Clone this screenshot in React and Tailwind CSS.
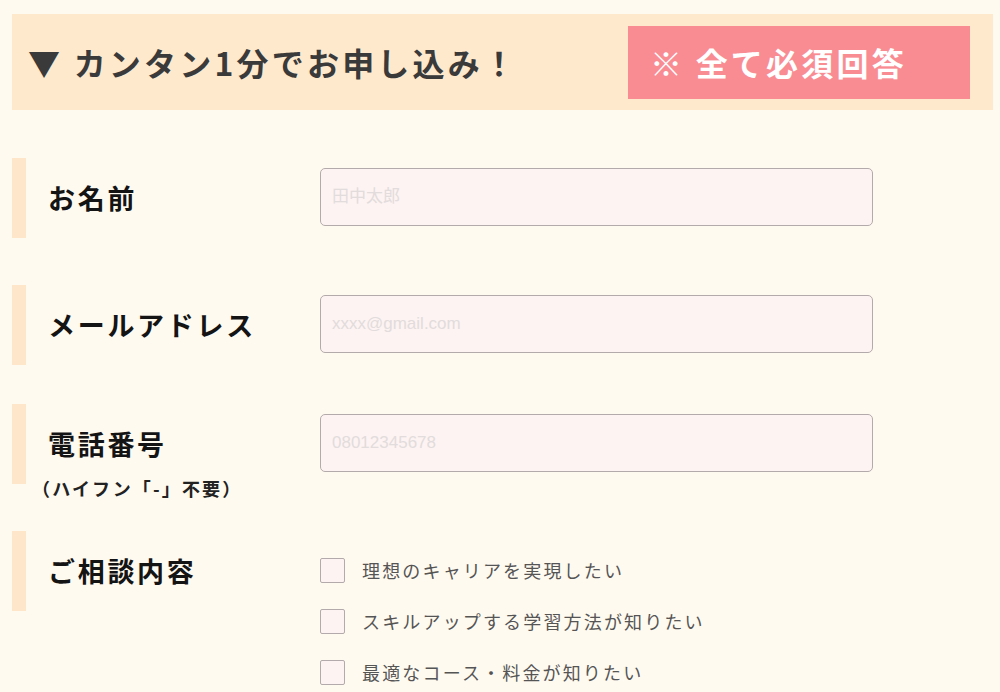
const jp = { fontFamily: '"Noto Sans CJK JP", "Noto Sans", sans-serif' };

const topics = [
  '理想のキャリアを実現したい',
  'スキルアップする学習方法が知りたい',
  '最適なコース・料金が知りたい',
];

function Bar() {
  return <div className="w-[14px] h-[80px] shrink-0 bg-[#fde6c9]" />;
}

function TextField({ placeholder, type = 'text' }) {
  return (
    <input
      type={type}
      placeholder={placeholder}
      className="mt-[10px] h-[58px] w-[553px] shrink-0 rounded-[5px] border border-[#b3abab] bg-[#fdf3f2] px-[11px] text-[17px] text-[#333] outline-none placeholder:text-[#e2dcdc] font-['Liberation_Sans','Noto_Sans_CJK_JP',sans-serif]"
    />
  );
}

function Row({ label, sub, children, className = '' }) {
  return (
    <div className={`flex items-start ${className}`}>
      <Bar />
      <div className="ml-[22px] w-[272px] shrink-0 pt-[20px]">
        <p className="text-[27px] leading-[40px] font-bold tracking-[0.1em] text-[#141414]">{label}</p>
        {sub && (
          <p className="mt-[12px] -ml-[16px] text-[18px] leading-[24px] font-bold tracking-[0.12em] text-[#222] whitespace-nowrap">{sub}</p>
        )}
      </div>
      {children}
    </div>
  );
}

export default function App() {
  return (
    <div className="min-h-screen bg-[#fffaf0] pl-[12px] pr-[7px] pt-[14px] pb-[20px]" style={jp}>
      <div className="flex h-[96px] items-center justify-between bg-[#fee9cd] pl-[16px] pr-[23px]">
        <h1 className="text-[32px] font-bold tracking-[0.1em] text-[#3a3a3a]">▼ カンタン1分でお申し込み！</h1>
        <div className="flex h-[73px] w-[342px] items-center bg-[#f98c93] pl-[22px]">
          <span className="text-[32px] font-bold tracking-[0.1em] text-white">※ 全て必須回答</span>
        </div>
      </div>

      <Row label="お名前" className="mt-[48px]">
        <TextField placeholder="田中太郎" />
      </Row>

      <Row label="メールアドレス" className="mt-[47px]">
        <TextField placeholder="xxxx@gmail.com" type="email" />
      </Row>

      <Row label="電話番号" sub="（ハイフン「-」不要）" className="mt-[39px]">
        <TextField placeholder="08012345678" type="tel" />
      </Row>

      <Row label="ご相談内容" className="mt-[31px]">
        <div className="mt-[27px] flex flex-col gap-[26px]">
          {topics.map((t) => (
            <label key={t} className="flex h-[25px] items-center">
              <span className="h-[25px] w-[25px] shrink-0 rounded-[2px] border border-[#b3abab] bg-[#fdf3f2]" />
              <span className="ml-[17px] text-[18px] tracking-[0.12em] text-[#555]">{t}</span>
            </label>
          ))}
        </div>
      </Row>
    </div>
  );
}
